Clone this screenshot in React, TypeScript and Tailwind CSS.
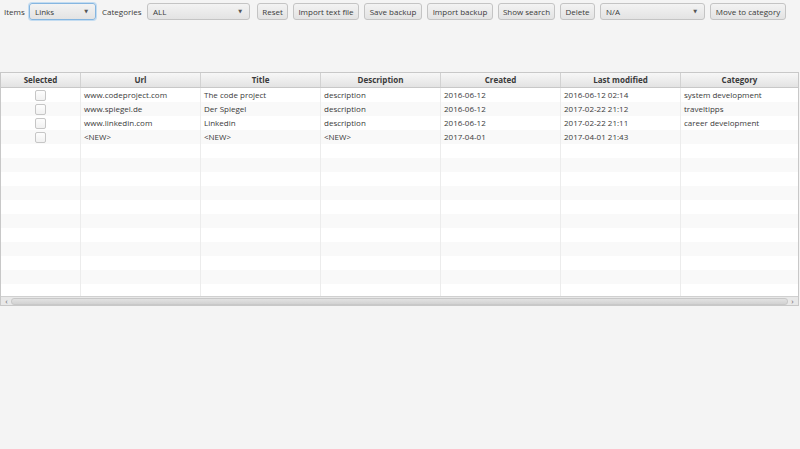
import React from 'react';

const font = { fontFamily: '"Open Sans", "DejaVu Sans", sans-serif' };

type Row = {
  url: string;
  title: string;
  description: string;
  created: string;
  modified: string;
  category: string;
};

const rows: Row[] = [
  { url: 'www.codeproject.com', title: 'The code project', description: 'description', created: '2016-06-12', modified: '2016-06-12 02:14', category: 'system development' },
  { url: 'www.spiegel.de', title: 'Der Spiegel', description: 'description', created: '2016-06-12', modified: '2017-02-22 21:12', category: 'traveltipps' },
  { url: 'www.linkedin.com', title: 'Linkedin', description: 'description', created: '2016-06-12', modified: '2017-02-22 21:11', category: 'career development' },
  { url: '<NEW>', title: '<NEW>', description: '<NEW>', created: '2017-04-01', modified: '2017-04-01 21:43', category: '' },
];

const Button = ({ label, w }: { label: string; w: string }) => (
  <button
    className={`h-[17px] ${w} shrink-0 rounded-[3px] border border-[#c4c4c4] bg-gradient-to-b from-[#f3f3f3] to-[#e3e3e3] text-[8px] leading-none text-[#3a3a3a] whitespace-nowrap flex items-center justify-center`}
  >
    {label}
  </button>
);

const Combo = ({ label, w, focused }: { label: string; w: string; focused?: boolean }) => (
  <div
    className={`h-[17px] ${w} shrink-0 rounded-[3px] border ${focused ? 'border-[#86b6e0] ring-1 ring-[#c3dcf1]' : 'border-[#c4c4c4]'} bg-gradient-to-b from-[#f3f3f3] to-[#e3e3e3] text-[8px] text-[#3a3a3a] flex items-center justify-between pl-[5px] pr-[7px]`}
  >
    <span className="leading-none">{label}</span>
    <span className="text-[5px] text-[#555] leading-none">▼</span>
  </div>
);

const Checkbox = () => (
  <div className="w-[11px] h-[11px] rounded-[2px] border border-[#c6c6c6] bg-gradient-to-b from-[#fdfdfd] to-[#f1f1f1]" />
);

const cols = ['w-[80px]', 'w-[120px]', 'w-[120px]', 'w-[120px]', 'w-[120px]', 'w-[120px]', 'flex-1'];
const headers = ['Selected', 'Url', 'Title', 'Description', 'Created', 'Last modified', 'Category'];

export default function App() {
  const filler = Array.from({ length: 11 });
  return (
    <div className="w-[800px] h-[449px] bg-[#f4f4f4] overflow-hidden flex flex-col" style={font}>
      <div className="flex items-center gap-[5px] pl-[4px] pt-[3px] h-[20px] text-[8px] text-[#3a3a3a]">
        <span className="w-[20px]">Items</span>
        <Combo label="Links" w="w-[67px]" focused />
        <span className="w-[40px] ml-[1px]">Categories</span>
        <Combo label="ALL" w="w-[103px]" />
        <Button label="Reset" w="w-[31px] ml-[2px]" />
        <Button label="Import text file" w="w-[66px]" />
        <Button label="Save backup" w="w-[58px]" />
        <Button label="Import backup" w="w-[66px]" />
        <Button label="Show search" w="w-[57px]" />
        <Button label="Delete" w="w-[35px]" />
        <Combo label="N/A" w="w-[105px]" />
        <Button label="Move to category" w="w-[76px]" />
      </div>

      <div className="mt-[52px] h-[234px] w-[799px] border border-[#c8c8c8] bg-white flex flex-col overflow-hidden">
        <div className="flex h-[15px] shrink-0 border-b border-[#c8c8c8] bg-gradient-to-b from-[#f7f7f7] to-[#e3e3e3]">
          {headers.map((h, i) => (
            <div
              key={h}
              className={`${cols[i]} shrink-0 border-r border-[#d2d2d2] last:border-r-0 flex items-center justify-center text-[8px] font-bold text-[#3a3a3a] leading-none`}
            >
              {h}
            </div>
          ))}
        </div>

        <div className="flex-1 flex flex-col overflow-hidden text-[8px] text-[#3a3a3a]">
          {rows.map((r, idx) => (
            <div key={idx} className={`flex h-[14px] shrink-0 ${idx % 2 === 1 ? 'bg-[#f9f9f9]' : 'bg-white'}`}>
              <div className={`${cols[0]} shrink-0 border-r border-[#ececec] flex items-center justify-center`}>
                <Checkbox />
              </div>
              {[r.url, r.title, r.description, r.created, r.modified, r.category].map((v, i) => (
                <div
                  key={i}
                  className={`${cols[i + 1]} shrink-0 border-r border-[#ececec] last:border-r-0 pl-[3px] flex items-center leading-none whitespace-nowrap`}
                >
                  {v}
                </div>
              ))}
            </div>
          ))}
          {filler.map((_, idx) => (
            <div key={`f${idx}`} className={`flex h-[14px] shrink-0 ${(idx + rows.length) % 2 === 1 ? 'bg-[#f9f9f9]' : 'bg-white'}`}>
              {cols.map((c, i) => (
                <div key={i} className={`${c} shrink-0 border-r border-[#ececec] last:border-r-0`} />
              ))}
            </div>
          ))}
          <div className="flex flex-1 bg-white">
            {cols.map((c, i) => (
              <div key={i} className={`${c} shrink-0 border-r border-[#ececec] last:border-r-0`} />
            ))}
          </div>
        </div>

        <div className="h-[9px] shrink-0 flex items-center bg-[#e8e8e8] border-t border-[#d0d0d0] px-[1px]">
          <div className="w-[9px] h-full flex items-center justify-center text-[8px] text-[#666] leading-none">‹</div>
          <div className="flex-1 h-[7px] rounded-[3px] bg-gradient-to-b from-[#e2e2e2] to-[#d2d2d2] border border-[#c8c8c8]" />
          <div className="w-[9px] h-full flex items-center justify-center text-[8px] text-[#666] leading-none">›</div>
        </div>
      </div>
    </div>
  );
}
